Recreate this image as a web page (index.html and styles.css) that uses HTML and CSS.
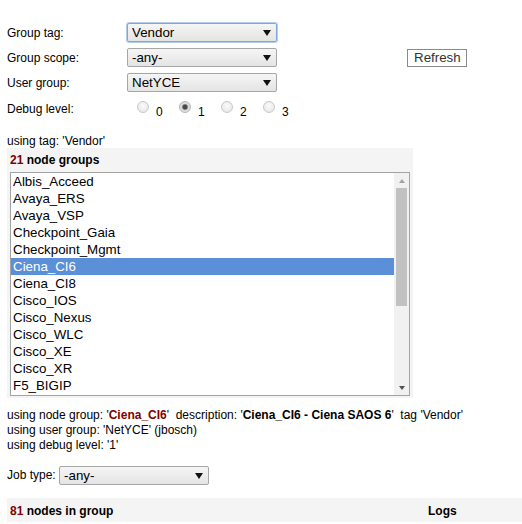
FILE: index.html
```html
<!DOCTYPE html>
<html lang="en">

<head>
    <meta charset="UTF-8">
    <meta name="viewport" content="width=device-width, initial-scale=1.0">
    <title>Node groups</title>
    <link rel="stylesheet" href="styles.css">
</head>

<body>
    <form class="filters">
        <button type="button" class="refresh">Refresh</button>

        <label>Group tag:</label>
        <span class="dropdown"><select class="focused"><option>Vendor</option></select></span>

        <label>Group scope:</label>
        <span class="dropdown"><select><option>-any-</option></select></span>

        <label>User group:</label>
        <span class="dropdown"><select><option>NetYCE</option></select></span>

        <label class="debug-label">Debug level:</label>
        <span class="radios">
            <label class="radio"><input type="radio" name="debug">0</label>
            <label class="radio"><input type="radio" name="debug" checked>1</label>
            <label class="radio"><input type="radio" name="debug">2</label>
            <label class="radio"><input type="radio" name="debug">3</label>
        </span>
    </form>

    <div class="tag-line">using tag: 'Vendor'</div>

    <div class="groups">
        <div class="head"><span class="count">21</span> node groups</div>
        <div class="group-list">
            <!-- only the rows in view; the thumb stands for the rest -->
            <ul class="options">
                <li>Albis_Acceed</li>
                <li>Avaya_ERS</li>
                <li>Avaya_VSP</li>
                <li>Checkpoint_Gaia</li>
                <li>Checkpoint_Mgmt</li>
                <li class="selected">Ciena_CI6</li>
                <li>Ciena_CI8</li>
                <li>Cisco_IOS</li>
                <li>Cisco_Nexus</li>
                <li>Cisco_WLC</li>
                <li>Cisco_XE</li>
                <li>Cisco_XR</li>
                <li>F5_BIGIP</li>
            </ul>
            <div class="scrollbar">
                <span class="arrow up"></span>
                <span class="track"><span class="thumb"></span></span>
                <span class="arrow down"></span>
            </div>
        </div>
    </div>

    <div class="info">
        using node group: '<b class="count">Ciena_CI6</b>'&nbsp; description: '<b>Ciena_CI6 - Ciena SAOS 6</b>'&nbsp; tag 'Vendor'<br>
        using user group: 'NetYCE' (jbosch)<br>
        using debug level: '1'
    </div>

    <div class="job">
        Job type: <span class="dropdown"><select><option>-any-</option></select></span>
    </div>

    <div class="nodes-head">
        <span><span class="count">81</span> nodes in group</span>
        <span>Logs</span>
    </div>
</body>

</html>
```

FILE: styles.css
```css
body {
    margin: 0;
    padding: 23px 0 0 7px;
    font-family: "Liberation Sans", Arial, sans-serif;
    font-size: 12px;
    line-height: 14px;
    color: #000;
}

.count {
    color: #800000;
    font-weight: bold;
}

/* filter form */
.filters {
    display: grid;
    grid-template-columns: 120px 150px 130px auto;
    grid-auto-rows: 19px;
    row-gap: 6px;
    align-items: center;
}

.filters > label {
    grid-column: 1;
}

.filters .dropdown {
    grid-column: 2;
}

.refresh {
    grid-column: 4;
    grid-row: 2;
    justify-self: start;
    width: 60px;
    height: 18px;
    padding: 0 6px;
    border: 1px solid #8a8a8a;
    background: #fff;
    color: #333;
    font-family: inherit;
    font-size: 13.33px;
    line-height: 16px;
    text-align: left;
}

.dropdown {
    position: relative;
    display: inline-block;
    width: 150px;
    height: 19px;
}

.dropdown::after {
    content: "";
    position: absolute;
    right: 6px;
    top: 7px;
    border-left: 4px solid transparent;
    border-right: 4px solid transparent;
    border-top: 6px solid #111;
    pointer-events: none;
}

.dropdown select {
    appearance: none;
    -webkit-appearance: none;
    box-sizing: border-box;
    width: 150px;
    height: 19px;
    margin: 0;
    padding: 0 20px 0 4px;
    border: 1px solid #a6a6a6;
    border-radius: 2px;
    background: linear-gradient(#f5f5f5, #e4e4e4);
    font-family: inherit;
    font-size: 13.33px;
    color: #000;
}

.dropdown select.focused {
    border-color: #7ea6da;
    box-shadow: 0 0 0 1px #b5cdec;
}

.debug-label {
    align-self: start;
    padding-top: 4px;
}

.radios {
    grid-column: 2 / span 2;
    align-self: start;
    display: flex;
    padding: 3px 0 0 10px;
}

.radio {
    width: 42px;
}

.radio input {
    appearance: none;
    -webkit-appearance: none;
    width: 12px;
    height: 12px;
    margin: 0 7px 0 0;
    vertical-align: 3px;
    border: 1px solid #c9c9c9;
    border-radius: 50%;
    background: radial-gradient(circle at 50% 40%, #fbfbfb, #e2e2e2);
    box-sizing: border-box;
}

.radio input:checked {
    border-color: #b4b4b4;
    background: radial-gradient(circle, #4a4a4a 0 2px, #8a8a8a 2.6px, #d8d8d8 3.4px, #ececec 100%);
}

.tag-line {
    margin-top: 17px;
}

/* node groups box */
.groups {
    box-sizing: border-box;
    width: 406px;
    padding: 5px 3px 2px;
    background: #f4f4f4;
}

.groups .head {
    font-weight: bold;
    margin-bottom: 5px;
}

.group-list {
    display: flex;
    box-sizing: border-box;
    width: 400px;
    height: 224px;
    border: 1px solid #a3a3a3;
    background: #fff;
}

.options {
    flex: 1;
    margin: 0;
    padding: 0;
    list-style: none;
    overflow: hidden;
    font-size: 13.33px;
}

.options li {
    height: 17px;
    line-height: 17px;
    padding: 0 2px;
}

.options li.selected {
    background: #5b8fd7;
    color: #fff;
}

.scrollbar {
    display: flex;
    flex-direction: column;
    width: 15px;
    background: #f1f1f1;
}

.scrollbar .arrow {
    display: flex;
    align-items: center;
    justify-content: center;
    height: 15px;
}

.scrollbar .arrow::before {
    content: "";
    border-left: 3.5px solid transparent;
    border-right: 3.5px solid transparent;
}

.scrollbar .up::before {
    border-bottom: 4px solid #a3a3a3;
}

.scrollbar .down::before {
    border-top: 4px solid #505050;
}

.scrollbar .track {
    flex: 1;
}

.scrollbar .thumb {
    display: block;
    height: 118px;
    margin: 0 2px;
    background: #c1c1c1;
}

/* summary lines */
.info {
    margin-top: 10px;
    line-height: 15px;
}

.job {
    margin-top: 13px;
    height: 19px;
    line-height: 19px;
}

.job .dropdown {
    vertical-align: top;
}

.nodes-head {
    display: grid;
    grid-template-columns: 418px auto;
    margin-top: 13px;
    padding: 6px 3px 4px;
    background: #f4f4f4;
    font-weight: bold;
}
```
